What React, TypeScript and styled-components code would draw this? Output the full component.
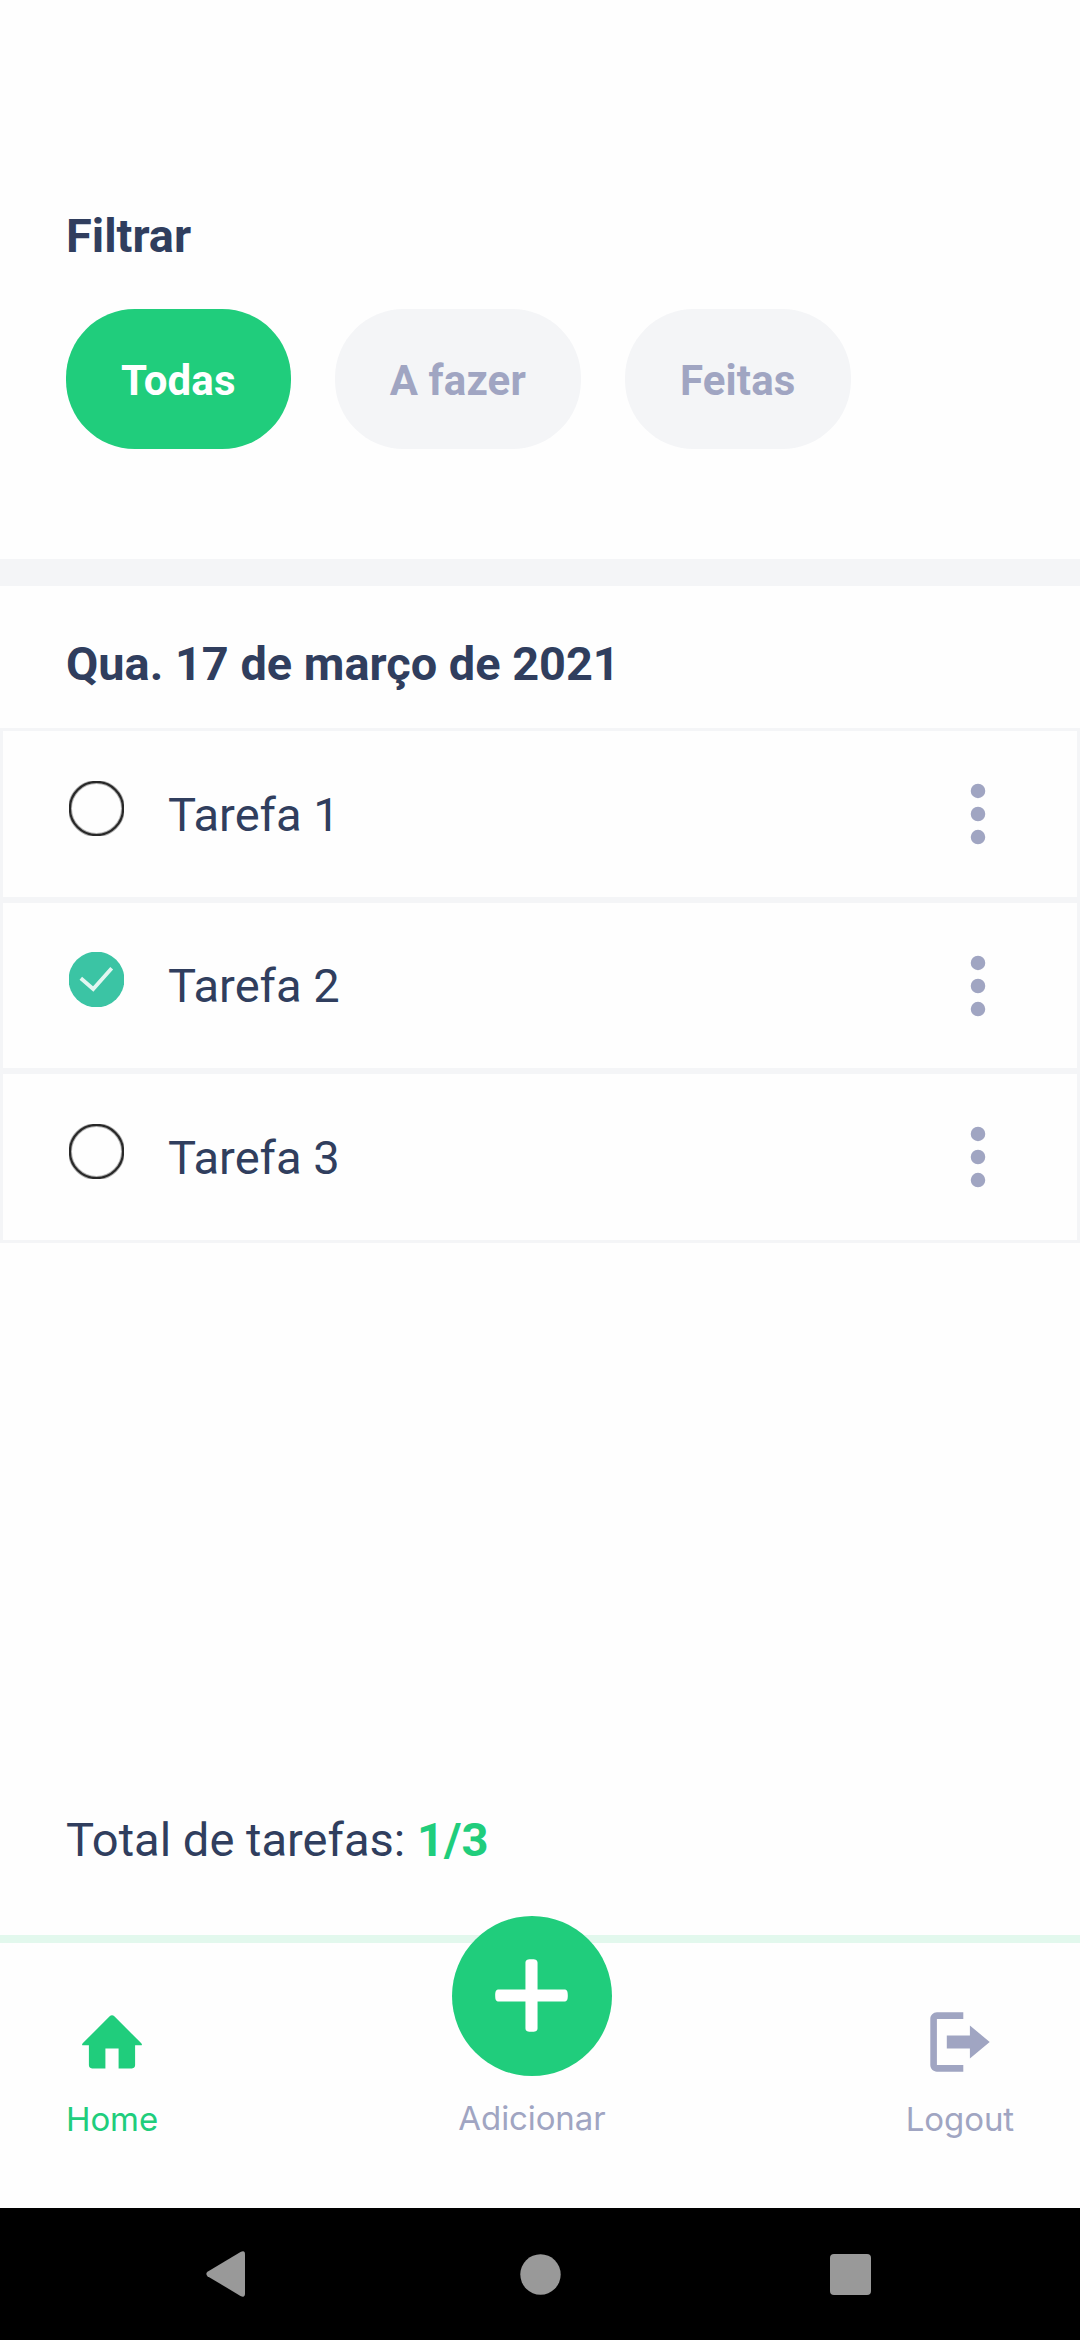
import React, { useState } from "react";
import styled, { createGlobalStyle } from "styled-components";

const colors = {
  green: "#20CD7C",
  greenSoft: "#E2F8ED",
  navy: "#303E5E",
  muted: "#A0A5C2",
  surface: "#F4F5F7",
  background: "#FEFEFE",
  check: "#3BC4A4",
};

const GlobalStyle = createGlobalStyle`
  * { box-sizing: border-box; }
  body { margin: 0; background: ${colors.background}; }
  button { border: 0; margin: 0; padding: 0; background: none; font: inherit; color: inherit; }
  svg { display: block; flex: none; }
`;

const Screen = styled.div`
  display: flex;
  flex-direction: column;
  width: 1080px;
  height: 2340px;
  overflow: hidden;
  background: ${colors.background};
  color: ${colors.navy};
  font-family: Roboto, "Noto Sans", sans-serif;
  font-size: 47.1px;
  line-height: 56px;
`;

const Filters = styled.header`
  height: 586px;
  padding: 208px 66px 0;
  border-bottom: 27px solid ${colors.surface};
`;

const Title = styled.h2`
  margin: 0;
  font-size: 46.9px;
  font-weight: 700;
`;

const FilterRow = styled.div`
  display: flex;
  gap: 44px;
  margin-top: 45px;
`;

const Pill = styled.button<{ $active: boolean }>`
  height: 140px;
  padding: 4px 55px 0;
  border-radius: 68.75px;
  font-size: 42px;
  font-weight: 700;
  letter-spacing: 0.15px;
  background: ${(p) => (p.$active ? colors.green : colors.surface)};
  color: ${(p) => (p.$active ? "#fff" : colors.muted)};
`;

const DateHeading = styled(Title)`
  height: 142.3px;
  padding: 50px 66px 0;
`;

const TaskList = styled.ul`
  margin: 0;
  padding: 0;
  list-style: none;
  display: grid;
  grid-auto-rows: 171.6px;
`;

const TaskItem = styled.li`
  display: flex;
  align-items: center;
  padding: 0 66px;
  border: 3px solid ${colors.surface};
`;

const Toggle = styled.button`
  margin-bottom: 12px;
`;

const TaskName = styled.span`
  flex: 1;
  margin-left: 44px;
  padding-top: 1px;
`;

const MenuButton = styled.button`
  color: ${colors.muted};
`;

const Total = styled.p`
  margin: auto 0 0;
  padding: 0 66px 67px;
`;

const TotalCount = styled.strong`
  color: ${colors.green};
`;

const TabBar = styled.nav`
  display: flex;
  justify-content: space-between;
  height: 273px;
  padding: 0 66px;
  border-top: 8px solid ${colors.greenSoft};
  font-family: Inter, sans-serif;
  font-size: 33px;
  font-weight: 400;
  letter-spacing: -0.1px;
  line-height: 40px;
`;

const Tab = styled.button<{ $active?: boolean }>`
  display: flex;
  flex-direction: column;
  align-items: center;
  gap: 24px;
  padding-top: 66px;
  letter-spacing: inherit;
  color: ${(p) => (p.$active ? colors.green : colors.muted)};
`;

const AddTab = styled(Tab)`
  margin-top: -27px;
  padding-top: 0;
  gap: 22px;
`;

const AddCircle = styled.span`
  display: grid;
  place-items: center;
  width: 160px;
  height: 160px;
  padding: 0 1px 1px 0;
  border-radius: 50%;
  background: ${colors.green};
  color: #fff;
`;

const SystemBar = styled.footer`
  display: flex;
  align-items: center;
  justify-content: space-between;
  height: 132px;
  padding: 0 209px 0 206px;
  background: #000;
  color: #999;
`;

const HomeButton = styled.button`
  margin-left: 5px;
`;

const Icon = ({ d, size = 66 }: { d: string; size?: number }) => (
  <svg width={size} height={size} viewBox="0 0 20 20" fill="currentColor">
    <path d={d} />
  </svg>
);

const HOME =
  "M18.672 11H17v6c0 .445-.194 1-1 1h-4v-6H8v6H4c-.806 0-1-.555-1-1v-6H1.328c-.598 0-.47-.324-.06-.748L9.292 2.22c.195-.202.451-.302.708-.312.257.01.513.109.708.312l8.023 8.031c.411.425.539.749-.059.749z";
const LOGOUT =
  "M19 10l-6-5v3H6v4h7v3l6-5zM3 3h8V1H3c-1.1 0-2 .9-2 2v14c0 1.1.9 2 2 2h8v-2H3V3z";
const PLUS =
  "M16 10c0 .553-.048 1-.601 1H11v4.399c0 .552-.447.601-1 .601-.553 0-1-.049-1-.601V11H4.601C4.049 11 4 10.553 4 10c0-.553.049-1 .601-1H9V4.601C9 4.048 9.447 4 10 4c.553 0 1 .048 1 .601V9h4.399c.553 0 .601.447.601 1z";
const DOTS =
  "M10 7.8a2.2 2.2 0 1 0 0 4.4 2.2 2.2 0 0 0 0-4.4zm0-2.6a2.2 2.2 0 1 0 0-4.4 2.2 2.2 0 0 0 0 4.4zm0 9.6a2.2 2.2 0 1 0 0 4.4 2.2 2.2 0 0 0 0-4.4z";

const CheckMark = ({ done }: { done: boolean }) => (
  <svg width="55" height="55" viewBox="0 0 55 55" fill="none">
    {done ? (
      <>
        <circle cx="27.5" cy="27.5" r="27.9" fill={colors.check} />
        <path d="M11.8 26.3L24.2 37L42.7 16.2" stroke="#E2F6F1" strokeWidth="3.8" />
      </>
    ) : (
      <>
        <circle cx="27.5" cy="27.5" r="26.5" stroke="#000" strokeOpacity="0.3" strokeWidth="4" />
        <circle cx="27.5" cy="27.5" r="26.6" stroke="#111" strokeOpacity="0.85" strokeWidth="2.2" />
      </>
    )}
  </svg>
);

const filters = ["Todas", "A fazer", "Feitas"];

export default function App() {
  const [filter, setFilter] = useState("Todas");
  const [tasks, setTasks] = useState([
    { name: "Tarefa 1", done: false },
    { name: "Tarefa 2", done: true },
    { name: "Tarefa 3", done: false },
  ]);
  const visible = tasks.filter(
    (t) => filter === "Todas" || t.done === (filter === "Feitas")
  );
  const toggle = (name: string) =>
    setTasks(tasks.map((t) => (t.name === name ? { ...t, done: !t.done } : t)));

  return (
    <Screen>
      <GlobalStyle />
      <Filters>
        <Title>Filtrar</Title>
        <FilterRow>
          {filters.map((f) => (
            <Pill key={f} $active={f === filter} onClick={() => setFilter(f)}>
              {f}
            </Pill>
          ))}
        </FilterRow>
      </Filters>
      <DateHeading>Qua. 17 de março de 2021</DateHeading>
      <TaskList>
        {visible.map((t) => (
          <TaskItem key={t.name}>
            <Toggle onClick={() => toggle(t.name)}>
              <CheckMark done={t.done} />
            </Toggle>
            <TaskName>{t.name}</TaskName>
            <MenuButton>
              <Icon d={DOTS} />
            </MenuButton>
          </TaskItem>
        ))}
      </TaskList>
      <Total>
        Total de tarefas:{" "}
        <TotalCount>
          {tasks.filter((t) => t.done).length}/{tasks.length}
        </TotalCount>
      </Total>
      <TabBar>
        <Tab $active>
          <Icon d={HOME} />
          Home
        </Tab>
        <AddTab>
          <AddCircle>
            <Icon d={PLUS} size={121} />
          </AddCircle>
          Adicionar
        </AddTab>
        <Tab>
          <Icon d={LOGOUT} />
          Logout
        </Tab>
      </TabBar>
      <SystemBar>
        <svg width="39" height="46" viewBox="0 0 39 46" fill="currentColor">
          <path d="M1.5 20.8L34.5 1.1Q39 -1.2 39 3.5V42.5Q39 47.2 34.5 44.9L1.5 25.2Q-.8 23 1.5 20.8z" />
        </svg>
        <HomeButton>
          <svg width="41" height="41" viewBox="0 0 41 41" fill="currentColor">
            <circle cx="20.5" cy="20.5" r="20.2" />
          </svg>
        </HomeButton>
        <svg width="41" height="41" viewBox="0 0 41 41" fill="currentColor">
          <rect width="41" height="41" rx="4" />
        </svg>
      </SystemBar>
    </Screen>
  );
}
